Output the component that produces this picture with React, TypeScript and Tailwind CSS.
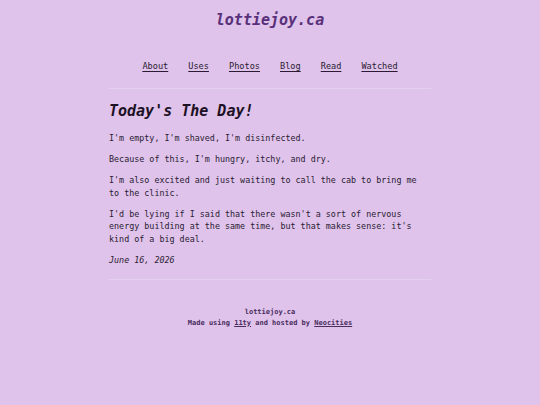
const mono = 'font-["DejaVu_Sans_Mono","Liberation_Mono",monospace]';

const links = ['About', 'Uses', 'Photos', 'Blog', 'Read', 'Watched'];

export default function App() {
  return (
    <div className={`min-h-[405px] w-full bg-[#dfc3ea] ${mono}`}>
      <header className="pt-[8px] text-center">
        <a className="text-[15px] leading-[20px] font-bold italic text-[#58307a]">lottiejoy.ca</a>
      </header>
      <div className="mx-auto w-[322px]">
        <nav className="mt-[28px] flex justify-center gap-[20px] text-[8.6px] leading-[13px] text-[#2a1b33]">
          {links.map((l) => (
            <a key={l} className="underline underline-offset-[1.5px]">{l}</a>
          ))}
        </nav>
        <hr className="mt-[15px] border-0 border-t border-[#e6d0ef]" />
        <main className="text-[#2a1b33]">
          <h1 className="mt-[12px] text-[15px] leading-[20px] font-bold italic text-[#1c1024]">Today's The Day!</h1>
          <div className="mt-[11px] text-[8.4px] leading-[12.6px] flex flex-col gap-[8.4px]">
            <p>I'm empty, I'm shaved, I'm disinfected.</p>
            <p>Because of this, I'm hungry, itchy, and dry.</p>
            <p>I'm also excited and just waiting to call the cab to bring me to the clinic.</p>
            <p>I'd be lying if I said that there wasn't a sort of nervous energy building at the same time, but that makes sense: it's kind of a big deal.</p>
            <p className="italic">June 16, 2026</p>
          </div>
        </main>
        <hr className="mt-[12.5px] border-0 border-t border-[#e6d0ef]" />
        <footer className="mt-[27px] text-center text-[7px] leading-[11px] font-bold text-[#4a2c5e]">
          <div>lottiejoy.ca</div>
          <div>
            Made using <a className="underline">11ty</a> and hosted by <a className="underline">Neocities</a>
          </div>
        </footer>
      </div>
    </div>
  );
}
